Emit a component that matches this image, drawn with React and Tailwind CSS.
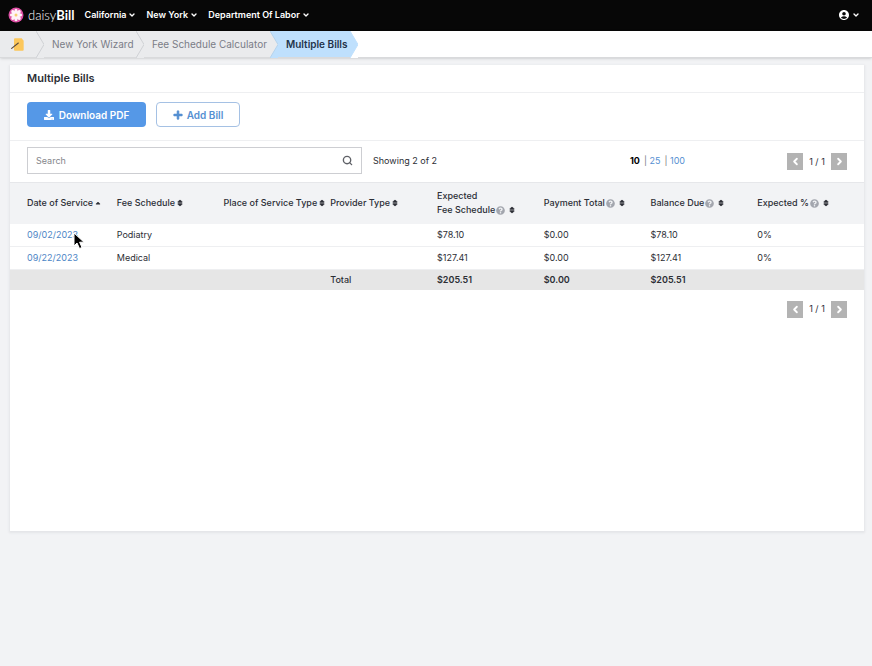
import React, { useState } from 'react';
import { ChevronDown, ChevronLeft, ChevronRight, Search } from 'lucide-react';
import { FaDownload, FaPlus, FaQuestionCircle, FaSort, FaSortUp } from 'react-icons/fa';
import { MdAccountCircle } from 'react-icons/md';

const menus = ['California', 'New York', 'Department Of Labor'];

const columns = [
  { label: 'Date of Service', sorted: true },
  { label: 'Fee Schedule' },
  { label: 'Place of Service Type' },
  { label: 'Provider Type' },
  { label: 'Fee Schedule', above: 'Expected', help: true },
  { label: 'Payment Total', help: true },
  { label: 'Balance Due', help: true },
  { label: 'Expected %', help: true },
];

const bills = [
  { date: '09/02/2023', schedule: 'Podiatry', expected: '$78.10', paid: '$0.00', balance: '$78.10', percent: '0%' },
  { date: '09/22/2023', schedule: 'Medical', expected: '$127.41', paid: '$0.00', balance: '$127.41', percent: '0%' },
];

const DaisyLogo = () => (
  <svg viewBox="0 0 32 32" className="size-4" aria-hidden="true">
    <circle cx="16" cy="16" r="15" fill="#dd4fa4" />
    <g fill="#fff3f8">
      {[0, 45, 90, 135, 180, 225, 270, 315].map((angle) => (
        <ellipse key={angle} cx="16" cy="9" rx="3.4" ry="5.5" transform={`rotate(${angle} 16 16)`} />
      ))}
    </g>
    <circle cx="16" cy="16" r="3" fill="#f8ce72" />
  </svg>
);

const WizardIcon = () => (
  <svg viewBox="0 0 39 39" className="size-[13px]" aria-hidden="true">
    <path d="M12 1h20l6 7v27a3 3 0 0 1-3 3H12a3 3 0 0 1-3-3V4a3 3 0 0 1 3-3z" fill="#fcc75b" />
    <path d="M2 31 22 15" stroke="#5b4a3a" strokeWidth="3.5" strokeLinecap="round" />
  </svg>
);

const Divider = ({ left, right, line }) => (
  <svg viewBox="0 0 8 27" className="h-[27px] w-2 shrink-0" aria-hidden="true">
    <rect width="8" height="27" fill={right} />
    <path d="M0 0 8 13.5 0 27z" fill={left} />
    <path d="M0 0 8 13.5 0 27" fill="none" stroke={line} />
  </svg>
);

const Pager = () => (
  <div className="flex items-center">
    <button type="button" aria-label="Previous page" className="flex h-[17px] w-4 items-center justify-center bg-[#b3b3b3] text-white">
      <ChevronLeft size={11} strokeWidth={4} />
    </button>
    <span className="w-7 text-center">1 / 1</span>
    <button type="button" aria-label="Next page" className="flex h-[17px] w-4 items-center justify-center bg-[#b3b3b3] text-white">
      <ChevronRight size={11} strokeWidth={4} />
    </button>
  </div>
);

const HeaderCell = ({ column }) => (
  <th scope="col" className="text-left font-medium first:pl-[17px]">
    {column.above && <div>{column.above}</div>}
    <button type="button" className="flex items-center gap-px whitespace-nowrap">
      {column.label}
      {column.help && <FaQuestionCircle size={9} className="mr-[2px] text-[#a3a6ae]" />}
      {column.sorted ? (
        <FaSortUp size={8} className="mt-[3px]" />
      ) : (
        <FaSort size={8} stroke="currentColor" strokeWidth={30} />
      )}
    </button>
  </th>
);

const App = () => {
  const [query, setQuery] = useState('');

  return (
    <div className="min-h-screen bg-[#f2f3f5] font-['Inter',sans-serif] text-[9px] leading-[14px] text-[#2c2e35]">
      <header className="flex h-[31px] items-center bg-[#070707] pr-3 pb-[2px] pl-2 text-white">
        <a href="#" className="flex items-center gap-1 font-['Lato',sans-serif] text-[13px] leading-4">
          <DaisyLogo />
          <span className="font-light">
            daisy<span className="font-bold">Bill</span>
          </span>
        </a>
        <nav className="ml-[10px] flex gap-[10px]">
          {menus.map((menu) => (
            <button key={menu} type="button" className="flex items-center gap-[2px] font-semibold">
              {menu}
              <ChevronDown size={8} strokeWidth={4} />
            </button>
          ))}
        </nav>
        <button type="button" aria-label="Account" className="ml-auto flex items-center gap-[2px]">
          <MdAccountCircle size={12} />
          <ChevronDown size={8} strokeWidth={4} />
        </button>
      </header>

      <nav aria-label="Breadcrumb" className="flex h-[27px] items-center border-b border-[#d9dadc] bg-white text-[10px] text-[#7a7d87] shadow-sm">
        <a href="#" aria-label="Home" className="flex h-full w-9 items-center bg-[#eaebed] pl-[11px]">
          <WizardIcon />
        </a>
        <Divider left="#eaebed" right="#eaebed" line="#cfd1d5" />
        <a href="#" className="flex h-full w-[92px] items-center bg-[#eaebed] pl-2 whitespace-nowrap">New York Wizard</a>
        <Divider left="#eaebed" right="#eaebed" line="#cfd1d5" />
        <a href="#" className="flex h-full w-[126px] items-center bg-[#eaebed] pl-2 whitespace-nowrap">Fee Schedule Calculator</a>
        <Divider left="#eaebed" right="#bfe0fd" line="#b5d3ec" />
        <span aria-current="page" className="flex h-full w-[72px] items-center bg-[#bfe0fd] pl-2 font-semibold whitespace-nowrap text-[#23334a]">Multiple Bills</span>
        <Divider left="#bfe0fd" right="#ffffff" line="#bfe0fd" />
      </nav>

      <main className="mt-[7px] mr-2 ml-[10px] min-h-[70vh] bg-white shadow-[0_1px_2px_1px_#e4e5e8]">
        <h1 className="border-b border-[#eeeff1] px-[17px] py-[6px] text-[11px] leading-[15px] font-semibold">Multiple Bills</h1>

        <div className="flex gap-[10px] border-b border-[#eeeff1] px-[17px] pt-[9px] pb-[13px] text-[10px] font-semibold">
          <button type="button" className="flex h-[25px] w-[119px] items-center justify-center gap-[5px] rounded-[4px] bg-[#5598e7] text-white">
            <FaDownload size={10} />
            Download PDF
          </button>
          <button type="button" className="flex h-[25px] w-[84px] items-center justify-center gap-1 rounded-[4px] border border-[#a5c1e4] text-[#5590d2]">
            <FaPlus size={10} stroke="currentColor" strokeWidth={30} />
            Add Bill
          </button>
        </div>

        <div className="flex h-[41px] items-center px-[17px] pb-[2px]">
          <div className="flex h-[27px] w-[335px] items-center border border-[#cdced2] pr-2">
            <input
              type="text"
              aria-label="Search"
              placeholder="Search"
              value={query}
              onChange={(e) => setQuery(e.target.value)}
              className="min-w-0 flex-1 px-2 outline-none placeholder:text-[#85868b]"
            />
            <Search size={11} strokeWidth={3} className="text-[#5f6167]" />
          </div>
          <span className="ml-[11px]">Showing 2 of 2</span>
          <div className="ml-auto flex gap-1 text-[#5590d2]">
            <span className="font-bold text-black">10</span>
            <span><span className="text-[#77797f]">|</span> <a href="#">25</a></span>
            <span><span className="text-[#77797f]">|</span> <a href="#">100</a></span>
          </div>
          <div className="ml-[102px] pt-[2px]">
            <Pager />
          </div>
        </div>

        <table className="w-full table-fixed border-collapse">
          <thead>
            <tr className="h-[41px] border-t border-[#e6e7ea] bg-[#f2f3f5]">
              {columns.map((column, i) => (
                <HeaderCell key={i} column={column} />
              ))}
            </tr>
          </thead>
          <tbody>
            {bills.map((bill) => (
              <tr key={bill.date} className="h-[23px] border-b border-[#eeeff1]">
                <td className="pl-[17px] text-[#4d86c6]"><a href="#">{bill.date}</a></td>
                <td>{bill.schedule}</td>
                <td />
                <td />
                <td>{bill.expected}</td>
                <td>{bill.paid}</td>
                <td>{bill.balance}</td>
                <td>{bill.percent}</td>
              </tr>
            ))}
          </tbody>
          <tfoot>
            <tr className="h-5 bg-[#e6e6e6] font-semibold">
              <td colSpan={3} />
              <td className="font-medium">Total</td>
              <td>$205.51</td>
              <td>$0.00</td>
              <td>$205.51</td>
              <td />
            </tr>
          </tfoot>
        </table>

        <div className="flex justify-end px-[17px] py-[11px]">
          <Pager />
        </div>
      </main>

      {/* mouse pointer */}
      <svg viewBox="0 0 12 18" className="pointer-events-none absolute top-[232px] left-[73px] h-[18px] w-3" aria-hidden="true">
        <path d="M1 1v13l3-3 2.500 5.500 2.500-1L6.600 10.200H11z" fill="#000" stroke="#fff" strokeWidth="1" />
      </svg>
    </div>
  );
};

export default App;
